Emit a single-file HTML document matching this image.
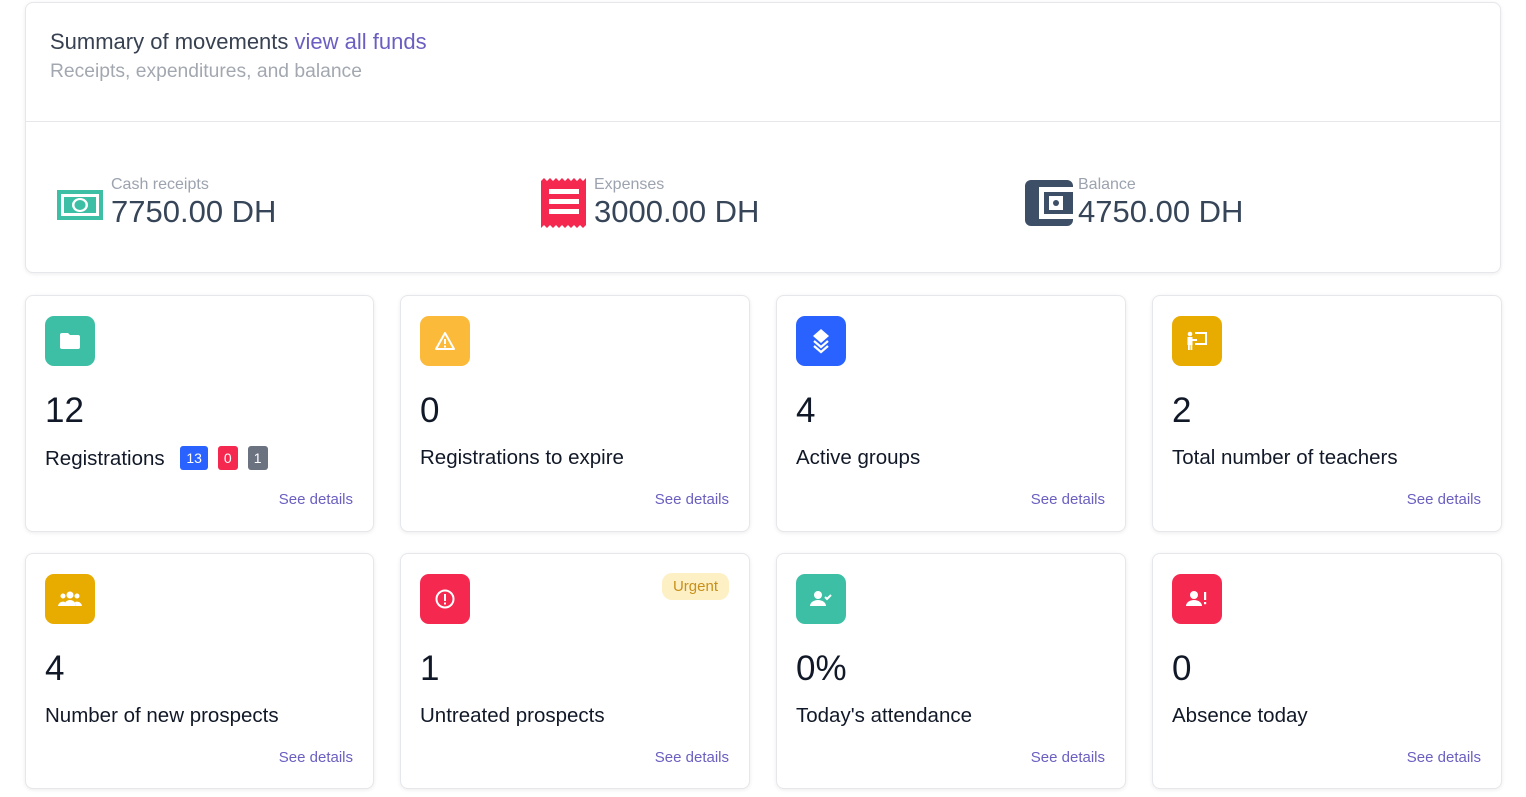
<!DOCTYPE html><html><head><style>
*{box-sizing:border-box;margin:0;padding:0}
body{width:1526px;height:797px;background:#fff;font-family:"Liberation Sans",sans-serif;position:relative;overflow:hidden;color:#1f2937}
.card{position:absolute;background:#fff;border:1px solid #e5e7eb;border-radius:8px;box-shadow:0 1px 4px rgba(0,0,0,.08)}
.ic{position:absolute;left:19px;top:20px;width:50px;height:50px;border-radius:9px;display:flex;align-items:center;justify-content:center}
.num{position:absolute;left:19px;top:95px;font-size:35px;color:#111827}
.lbl{position:absolute;left:19px;top:150px;font-size:20.5px;color:#111827}
.see{position:absolute;right:20px;top:195px;font-size:15px;color:#6a5fc1}
.b{display:inline-block;font-size:14px;color:#fff;padding:4px 6px;border-radius:3px;margin-left:10px;vertical-align:2px}
.st{position:absolute;top:172px;display:flex;align-items:center}
.st .t{font-size:16px;color:#9ca3af;line-height:20px}
.st .v{font-size:31px;color:#374559;line-height:34px}
</style></head><body>
<div class="card" style="left:25px;top:2px;width:1476px;height:271px">
<div style="position:absolute;left:24px;top:26px;font-size:22px;color:#374151">Summary of movements <span style="color:#6a5fc1">view all funds</span></div>
<div style="position:absolute;left:24px;top:58px;font-size:19.3px;color:#a3a8b0">Receipts, expenditures, and balance</div>
<div style="position:absolute;left:0;right:0;top:118px;border-top:1px solid #e5e7eb"></div>
<div class="st" style="left:31px"><svg width="46" height="32" style="margin-right:8px;margin-top:6px"><rect x="0" y="1" width="46" height="30" fill="#3dbfa5"/><rect x="4" y="5" width="38" height="22" fill="#fff"/><rect x="7" y="8" width="32" height="16" fill="#3dbfa5"/><ellipse cx="23" cy="16" rx="8" ry="7" fill="#fff"/><ellipse cx="23" cy="16" rx="5.5" ry="5" fill="#3dbfa5"/></svg><div><div class="t">Cash receipts</div><div class="v">7750.00 DH</div></div></div>
<div class="st" style="left:515px"><svg width="46" height="50" style="margin-right:7px;margin-top:2px"><path d="M0 3 l3-3 3 3 3-3 3 3 3-3 3 3 3-3 3 3 3-3 3 3 3-3 3 3 3-3 3 3 3-3 V47 l-3 3-3-3-3 3-3-3-3 3-3-3-3 3-3-3-3 3-3-3-3 3-3-3-3 3-3-3-3 3Z" fill="#f5294f"/><rect x="8" y="11" width="30" height="5" fill="#fff"/><rect x="8" y="21" width="30" height="5" fill="#fff"/><rect x="8" y="31" width="30" height="5" fill="#fff"/></svg><div><div class="t">Expenses</div><div class="v">3000.00 DH</div></div></div>
<div class="st" style="left:999px"><svg width="48" height="46" style="margin-right:5px;margin-top:2px"><rect x="0" y="0" width="48" height="46" rx="6" fill="#3d4f66"/><path d="M14 7 H48 V39 H14 Z" fill="#fff"/><rect x="19" y="12" width="29" height="22" fill="#3d4f66"/><rect x="24" y="16" width="14" height="14" fill="#fff"/><circle cx="31" cy="23" r="3" fill="#3d4f66"/></svg><div><div class="t">Balance</div><div class="v">4750.00 DH</div></div></div>
</div>

<div class="card" style="left:25px;top:295px;width:349px;height:237px">
<div class="ic" style="background:#3dbfa5"><svg width="22" height="18"><path d="M1 3 a2 2 0 0 1 2-2 h6 l2 2 h8 a2 2 0 0 1 2 2 v10 a2 2 0 0 1-2 2 H3 a2 2 0 0 1-2-2Z" fill="#fff"/></svg></div>
<div class="num">12</div><div class="lbl">Registrations <span class="b" style="background:#2962ff">13</span><span class="b" style="background:#f5294f">0</span><span class="b" style="background:#6b7280">1</span></div><div class="see">See details</div></div>
<div class="card" style="left:400px;top:295px;width:350px;height:237px">
<div class="ic" style="background:#fcba3a"><svg width="22" height="20"><path d="M11 2 L20 18 H2 Z" fill="none" stroke="#fff" stroke-width="2" stroke-linejoin="round"/><rect x="10" y="8" width="2" height="5" fill="#fff"/><rect x="10" y="14.5" width="2" height="2" fill="#fff"/></svg></div>
<div class="num">0</div><div class="lbl">Registrations to expire</div><div class="see">See details</div></div>
<div class="card" style="left:776px;top:295px;width:350px;height:237px">
<div class="ic" style="background:#2962ff"><svg width="20" height="26"><path d="M10 1 L18 8 L10 15 L2 8Z" fill="#fff"/><path d="M3 13 L10 19 L17 13 M3 18 L10 24 L17 18" fill="none" stroke="#fff" stroke-width="2.2"/></svg></div>
<div class="num">4</div><div class="lbl">Active groups</div><div class="see">See details</div></div>
<div class="card" style="left:1152px;top:295px;width:350px;height:237px">
<div class="ic" style="background:#e8ab00"><svg width="24" height="24"><circle cx="5" cy="5" r="2.3" fill="#fff"/><rect x="2.5" y="8" width="5" height="8" fill="#fff"/><rect x="3" y="15" width="1.8" height="6" fill="#fff"/><rect x="5.5" y="15" width="1.8" height="6" fill="#fff"/><path d="M10 4 H21 V15 H10" fill="none" stroke="#fff" stroke-width="2"/><rect x="7" y="10" width="5" height="2" fill="#fff"/></svg></div>
<div class="num">2</div><div class="lbl">Total number of teachers</div><div class="see">See details</div></div>

<div class="card" style="left:25px;top:553px;width:349px;height:236px">
<div class="ic" style="background:#e8ab00"><svg width="26" height="20"><circle cx="13" cy="6" r="3.5" fill="#fff"/><circle cx="6" cy="7" r="2.5" fill="#fff"/><circle cx="20" cy="7" r="2.5" fill="#fff"/><path d="M7 17 a6 6 0 0 1 12 0Z M1 17 a5 5 0 0 1 7-4 l-1 4Z M25 17 a5 5 0 0 0-7-4 l1 4Z" fill="#fff"/></svg></div>
<div class="num">4</div><div class="lbl">Number of new prospects</div><div class="see">See details</div></div>
<div class="card" style="left:400px;top:553px;width:350px;height:236px">
<div class="ic" style="background:#f5294f"><svg width="22" height="22"><circle cx="11" cy="11" r="8.5" fill="none" stroke="#fff" stroke-width="2"/><rect x="10" y="6" width="2" height="7" fill="#fff"/><rect x="10" y="14.5" width="2" height="2" fill="#fff"/></svg></div>
<div style="position:absolute;right:20px;top:19px;background:#fdf0c4;color:#c8901a;font-size:15px;padding:5px 11px;border-radius:10px">Urgent</div>
<div class="num">1</div><div class="lbl">Untreated prospects</div><div class="see">See details</div></div>
<div class="card" style="left:776px;top:553px;width:350px;height:236px">
<div class="ic" style="background:#3dbfa5"><svg width="24" height="20"><circle cx="9" cy="6" r="4" fill="#fff"/><path d="M1 17 a8 6 0 0 1 16 0Z" fill="#fff"/><path d="M16 8 l2 2 4-4" fill="none" stroke="#fff" stroke-width="2"/></svg></div>
<div class="num">0%</div><div class="lbl">Today's attendance</div><div class="see">See details</div></div>
<div class="card" style="left:1152px;top:553px;width:350px;height:236px">
<div class="ic" style="background:#f5294f"><svg width="24" height="20"><circle cx="9" cy="6" r="4" fill="#fff"/><path d="M1 17 a8 6 0 0 1 16 0Z" fill="#fff"/><rect x="19" y="3" width="2.2" height="8" fill="#fff"/><rect x="19" y="13" width="2.2" height="2.2" fill="#fff"/></svg></div>
<div class="num">0</div><div class="lbl">Absence today</div><div class="see">See details</div></div>
</body></html>
